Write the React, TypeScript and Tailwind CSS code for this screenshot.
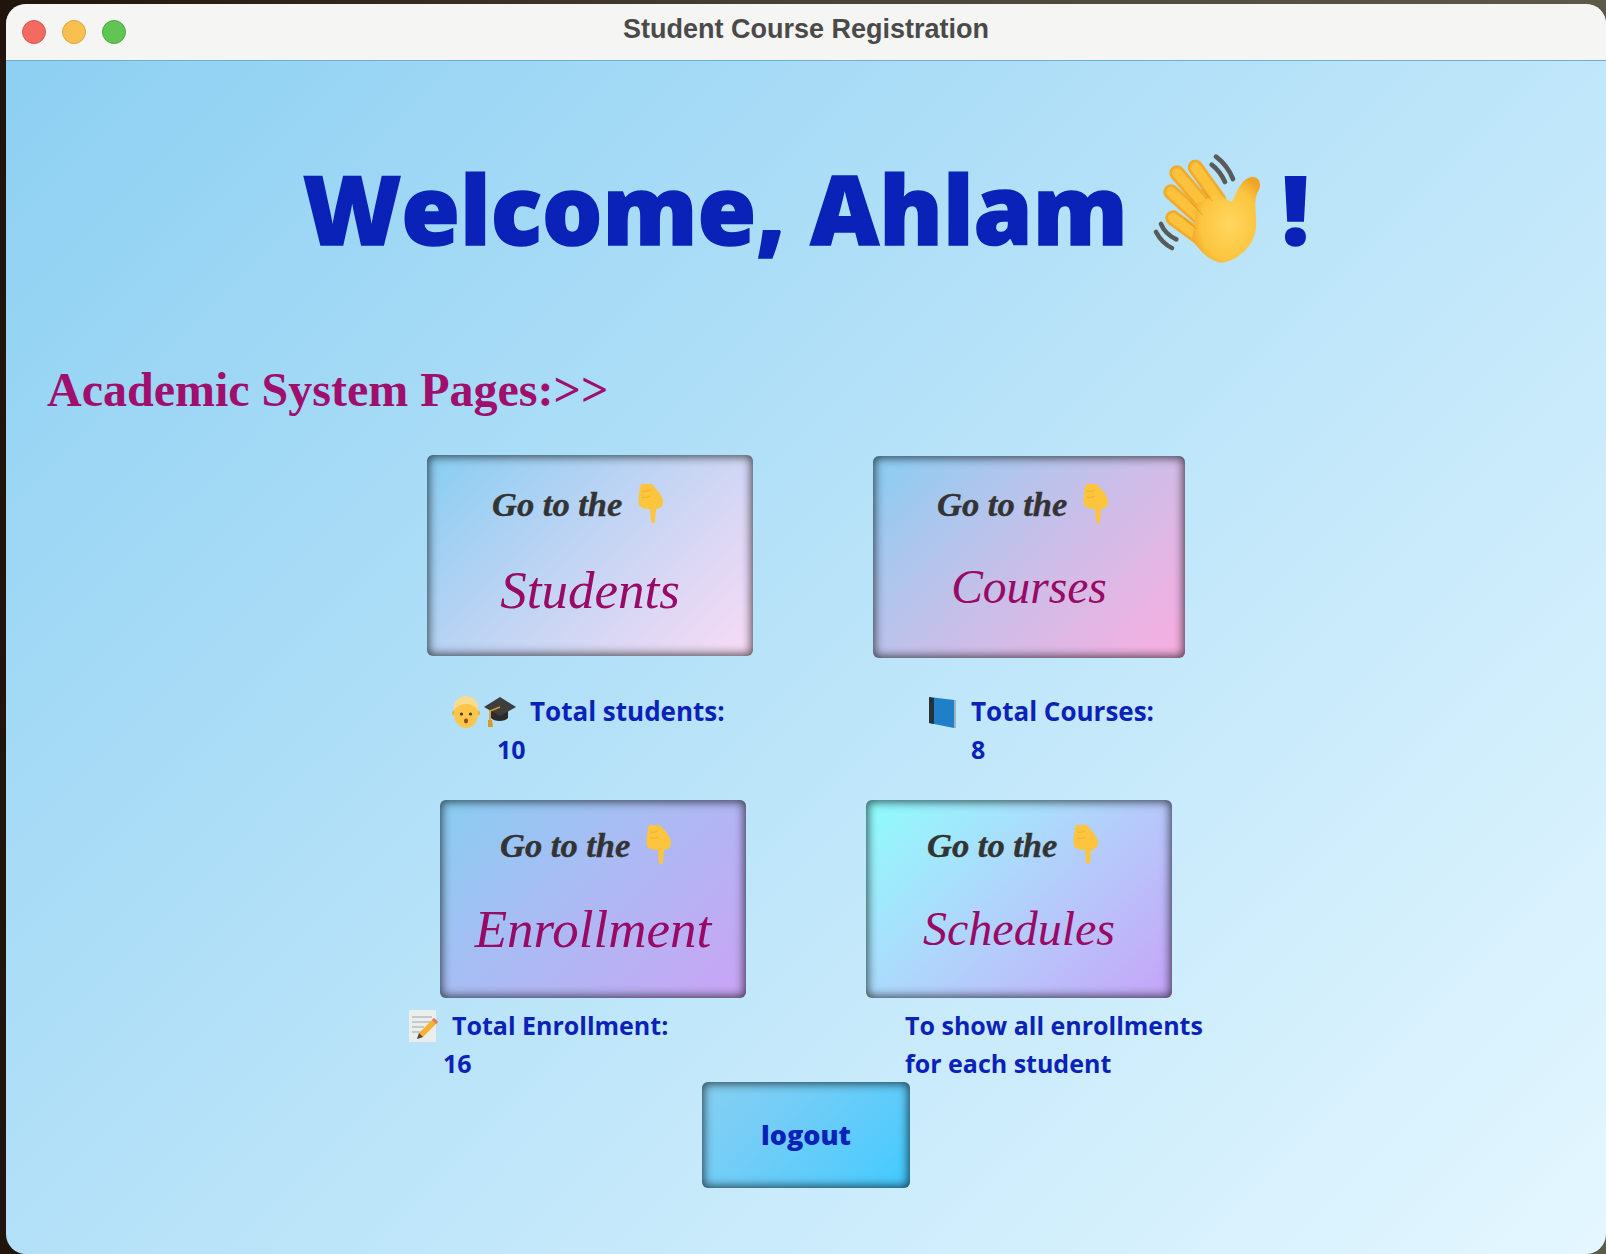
import React from "react";

const comic = "font-['Comic_Sans_MS','Open_Sans',sans-serif] font-bold text-[25px] leading-[37.5px] text-[#0b22b8]";

function WaveHand() {
  return (
    <svg width="110" height="110" viewBox="25 25 330 330" className="shrink-0">
      <defs>
        <radialGradient id="palm" cx="0.55" cy="0.55" r="0.6">
          <stop offset="0" stopColor="#ffd75f" />
          <stop offset="0.7" stopColor="#fcc53f" />
          <stop offset="1" stopColor="#f0a526" />
        </radialGradient>
      </defs>
      <g fill="none" stroke="#5a5a5a" strokeWidth="14" strokeLinecap="round">
        <path d="M217 36c24 18 40 40 51 67" />
        <path d="M204 60c18 14 30 30 40 52" />
        <path d="M52 238c8 20 24 36 46 46" />
        <path d="M37 262c12 22 26 38 48 48" />
      </g>
      <g fill="none" stroke="#f2ab2b" strokeLinecap="round" strokeWidth="46">
        <path d="M100 85 190 190" />
        <path d="M155 68 225 165" />
        <path d="M82 142 175 225" />
        <path d="M88 220 170 280" />
      </g>
      <g fill="none" stroke="#fcc23c" strokeLinecap="round" strokeWidth="30">
        <path d="M100 85 190 190" />
        <path d="M155 68 225 165" />
        <path d="M82 142 175 225" />
        <path d="M88 220 170 280" />
      </g>
      <path
        d="M160 175 222 150 265 172C280 140 292 102 325 96 352 96 354 125 342 142 328 170 340 210 337 250 332 310 270 354 230 354 200 349 170 322 145 285z"
        fill="url(#palm)"
      />
      <path
        d="M205 168 175 135M176 210 140 172M158 252 122 222"
        stroke="#e39a1f"
        strokeWidth="3"
        strokeLinecap="round"
        fill="none"
      />
    </svg>
  );
}

function PointDown() {
  return (
    <svg width="26" height="40" viewBox="0 0 26 40" className="shrink-0">
      <path
        d="M3 0h11c2 3 5 5 8 10 3 4 4 9 2 12-2 2-4 3-6 3l-1 12c0 3-4 3-4 0l-1-12c-4 0-9-1-11-4C0 16 1 6 3 0z"
        fill="#fcc53d"
      />
      <path d="M4 7c3 1 6 0 8-1M4 13c3 1 6 0 8-1" stroke="#f0b02c" strokeWidth="1" fill="none" />
    </svg>
  );
}

function Boy() {
  return (
    <svg width="28" height="32" viewBox="0 0 28 32" className="shrink-0">
      <circle cx="2.5" cy="17" r="2.5" fill="#f3ae33" />
      <circle cx="25.5" cy="17" r="2.5" fill="#f3ae33" />
      <ellipse cx="14" cy="18" rx="12" ry="14" fill="#fcc64a" />
      <path d="M2 14C1 5 7 0 14 0s13 5 12 14c-4-5-8-6-12-6S6 9 2 14z" fill="#f7dc90" />
      <circle cx="9.5" cy="18" r="1.6" fill="#4b3420" />
      <circle cx="18.5" cy="18" r="1.6" fill="#4b3420" />
      <ellipse cx="14" cy="25" rx="2" ry="2.4" fill="#8a4b20" />
    </svg>
  );
}

function GradCap() {
  return (
    <svg width="32" height="32" viewBox="0 0 32 32" className="shrink-0">
      <path d="M7 15v7c3 4 14 4 17 0v-7z" fill="#2b2b2b" />
      <path d="M16 1 32 11 16 20 0 11z" fill="#3d3d3d" />
      <path d="M16 11 6 15v9" stroke="#d99a2b" strokeWidth="1.6" fill="none" />
      <path d="M4 24h4l1 7H4z" fill="#d99a2b" />
    </svg>
  );
}

function BookIcon() {
  return (
    <svg width="28" height="32" viewBox="0 0 28 32" className="shrink-0 blur-[0.4px]">
      <path d="M1 1 26 4v28L1 27z" fill="#1f7fc8" />
      <path d="M1 1 6 2v26l-5-1z" fill="#26313a" />
      <path d="M26 4h2v28h-2z" fill="#9fb4c0" />
    </svg>
  );
}

function MemoIcon() {
  return (
    <svg width="29" height="32" viewBox="0 0 29 32" className="shrink-0">
      <rect x="0" y="0" width="27" height="32" rx="1" fill="#eceeee" />
      <path d="M3 7h20M3 12h20M3 17h12M3 22h8" stroke="#b9bcc0" strokeWidth="1.5" />
      <path d="M25 8l4 4-15 15-6 2 2-6z" fill="#f5b332" />
      <path d="M25 8l4 4-2 2-4-4z" fill="#e8756b" />
      <path d="M10 23l-2 6 6-2z" fill="#4a4a4a" />
    </svg>
  );
}

function Card({
  box,
  offset,
  label,
  labelClass,
}: {
  box: string;
  offset: string;
  label: string;
  labelClass: string;
}) {
  return (
    <button
      className={
        "flex flex-col rounded-[6px] shadow-[inset_0_0_10px_2px_rgba(0,0,0,0.65)] bg-linear-135 " + box
      }
    >
      <div className={"flex items-start " + offset}>
        <span className="mt-px font-['Liberation_Serif',serif] font-bold italic text-[34.5px] leading-[38px] text-[#333333] [-webkit-text-stroke:0.4px_#333333]">
          Go to the
        </span>
        <span className="ml-[16px]">
          <PointDown />
        </span>
      </div>
      <div
        className={
          "text-center font-['Liberation_Serif',serif] italic leading-[60px] text-[#980a66] " +
          labelClass
        }
      >
        {label}
      </div>
    </button>
  );
}

export default function App() {
  return (
    <div className="h-[1254px] w-[1606px] overflow-hidden bg-[#1f140c] bg-linear-to-r from-[#20140c] via-[#4a4238] to-[#5c5a48] pl-[6px] pt-[4px]">
      <div className="flex h-[1250px] w-[1600px] flex-col overflow-hidden rounded-[20px] bg-linear-135 from-[#8bcff2] to-[#e4f7ff]">
        <div className="relative flex h-[57px] shrink-0 items-center justify-center border-b border-[#6fb0d2] bg-[#f5f5f3] pb-[6px]">
          <div className="absolute left-[16px] top-[16px] flex gap-[16px]">
            <span className="h-[24px] w-[24px] rounded-full border border-[#d9584f] bg-[#f36b60]" />
            <span className="h-[24px] w-[24px] rounded-full border border-[#dfa43f] bg-[#f8c04f]" />
            <span className="h-[24px] w-[24px] rounded-full border border-[#4ba945] bg-[#61c554]" />
          </div>
          <span className="font-['Liberation_Sans',sans-serif] text-[27px] font-bold text-[#4a4a4a]">
            Student Course Registration
          </span>
        </div>

        <div className="mt-[87px] flex h-[120px] items-center justify-center font-['Open_Sans',sans-serif] text-[95px] font-extrabold leading-[120px] text-[#0b22b8] [-webkit-text-stroke:1.5px_#0b22b8]">
          <span>Welcome, Ahlam</span>
          <span className="ml-[24px]">
            <WaveHand />
          </span>
          <span className="ml-[20px]">!</span>
        </div>

        <h2 className="ml-[41px] mt-[94px] font-['Liberation_Serif',serif] text-[48px] font-bold leading-[56px] text-[#a00f6e]">
          Academic System Pages:&gt;&gt;
        </h2>

        <div className="ml-[421px] mt-[37px] flex items-start gap-[120px]">
          <Card
            box="h-[201px] w-[326px] from-[#87cdf2] to-[#f9dbf5]"
            offset="pl-[65px] pt-[29px]"
            label="Students"
            labelClass="mt-[36px] text-[53px]"
          />
          <Card
            box="mt-px h-[202px] w-[312px] from-[#87cdf2] to-[#f9ade0]"
            offset="pl-[64px] pt-[28px]"
            label="Courses"
            labelClass="mt-[33px] text-[47.5px]"
          />
        </div>

        <div className={"mt-[35px] flex h-[75px] " + comic}>
          <div className="w-[922px] pl-[446px]">
            <div className="flex h-[37.5px] items-center">
              <Boy />
              <span className="ml-[4px]">
                <GradCap />
              </span>
              <span className="ml-[14px] text-[26px]">Total students:</span>
            </div>
            <div className="pl-[45px]">10</div>
          </div>
          <div>
            <div className="flex h-[37.5px] items-center">
              <BookIcon />
              <span className="ml-[15px] text-[26px]">Total Courses:</span>
            </div>
            <div className="pl-[43px]">8</div>
          </div>
        </div>

        <div className="ml-[434px] mt-[32px] flex items-start gap-[120px]">
          <Card
            box="h-[198px] w-[306px] from-[#87cdf2] to-[#c9a3f5]"
            offset="pl-[60px] pt-[25px]"
            label="Enrollment"
            labelClass="mt-[34px] text-[53px]"
          />
          <Card
            box="h-[198px] w-[306px] from-[#8cfdfd] to-[#c5a3f8]"
            offset="pl-[61px] pt-[25px]"
            label="Schedules"
            labelClass="mt-[34px] text-[48px]"
          />
        </div>

        <div className={"mt-[9px] flex h-[75px] " + comic}>
          <div className="w-[899px] pl-[403px]">
            <div className="flex h-[37.5px] items-center">
              <MemoIcon />
              <span className="ml-[14px]">Total Enrollment:</span>
            </div>
            <div className="pl-[34px]">16</div>
          </div>
          <div>
            <div>To show all enrollments</div>
            <div>for each student</div>
          </div>
        </div>

        <div className="flex justify-center">
          <button className="h-[106px] w-[208px] rounded-[6px] bg-linear-135 from-[#87cff2] to-[#3fcaff] font-['Open_Sans',sans-serif] text-[27px] font-extrabold text-[#0b22b8] shadow-[inset_0_0_10px_2px_rgba(0,0,0,0.65)]">
            logout
          </button>
        </div>
      </div>
    </div>
  );
}
